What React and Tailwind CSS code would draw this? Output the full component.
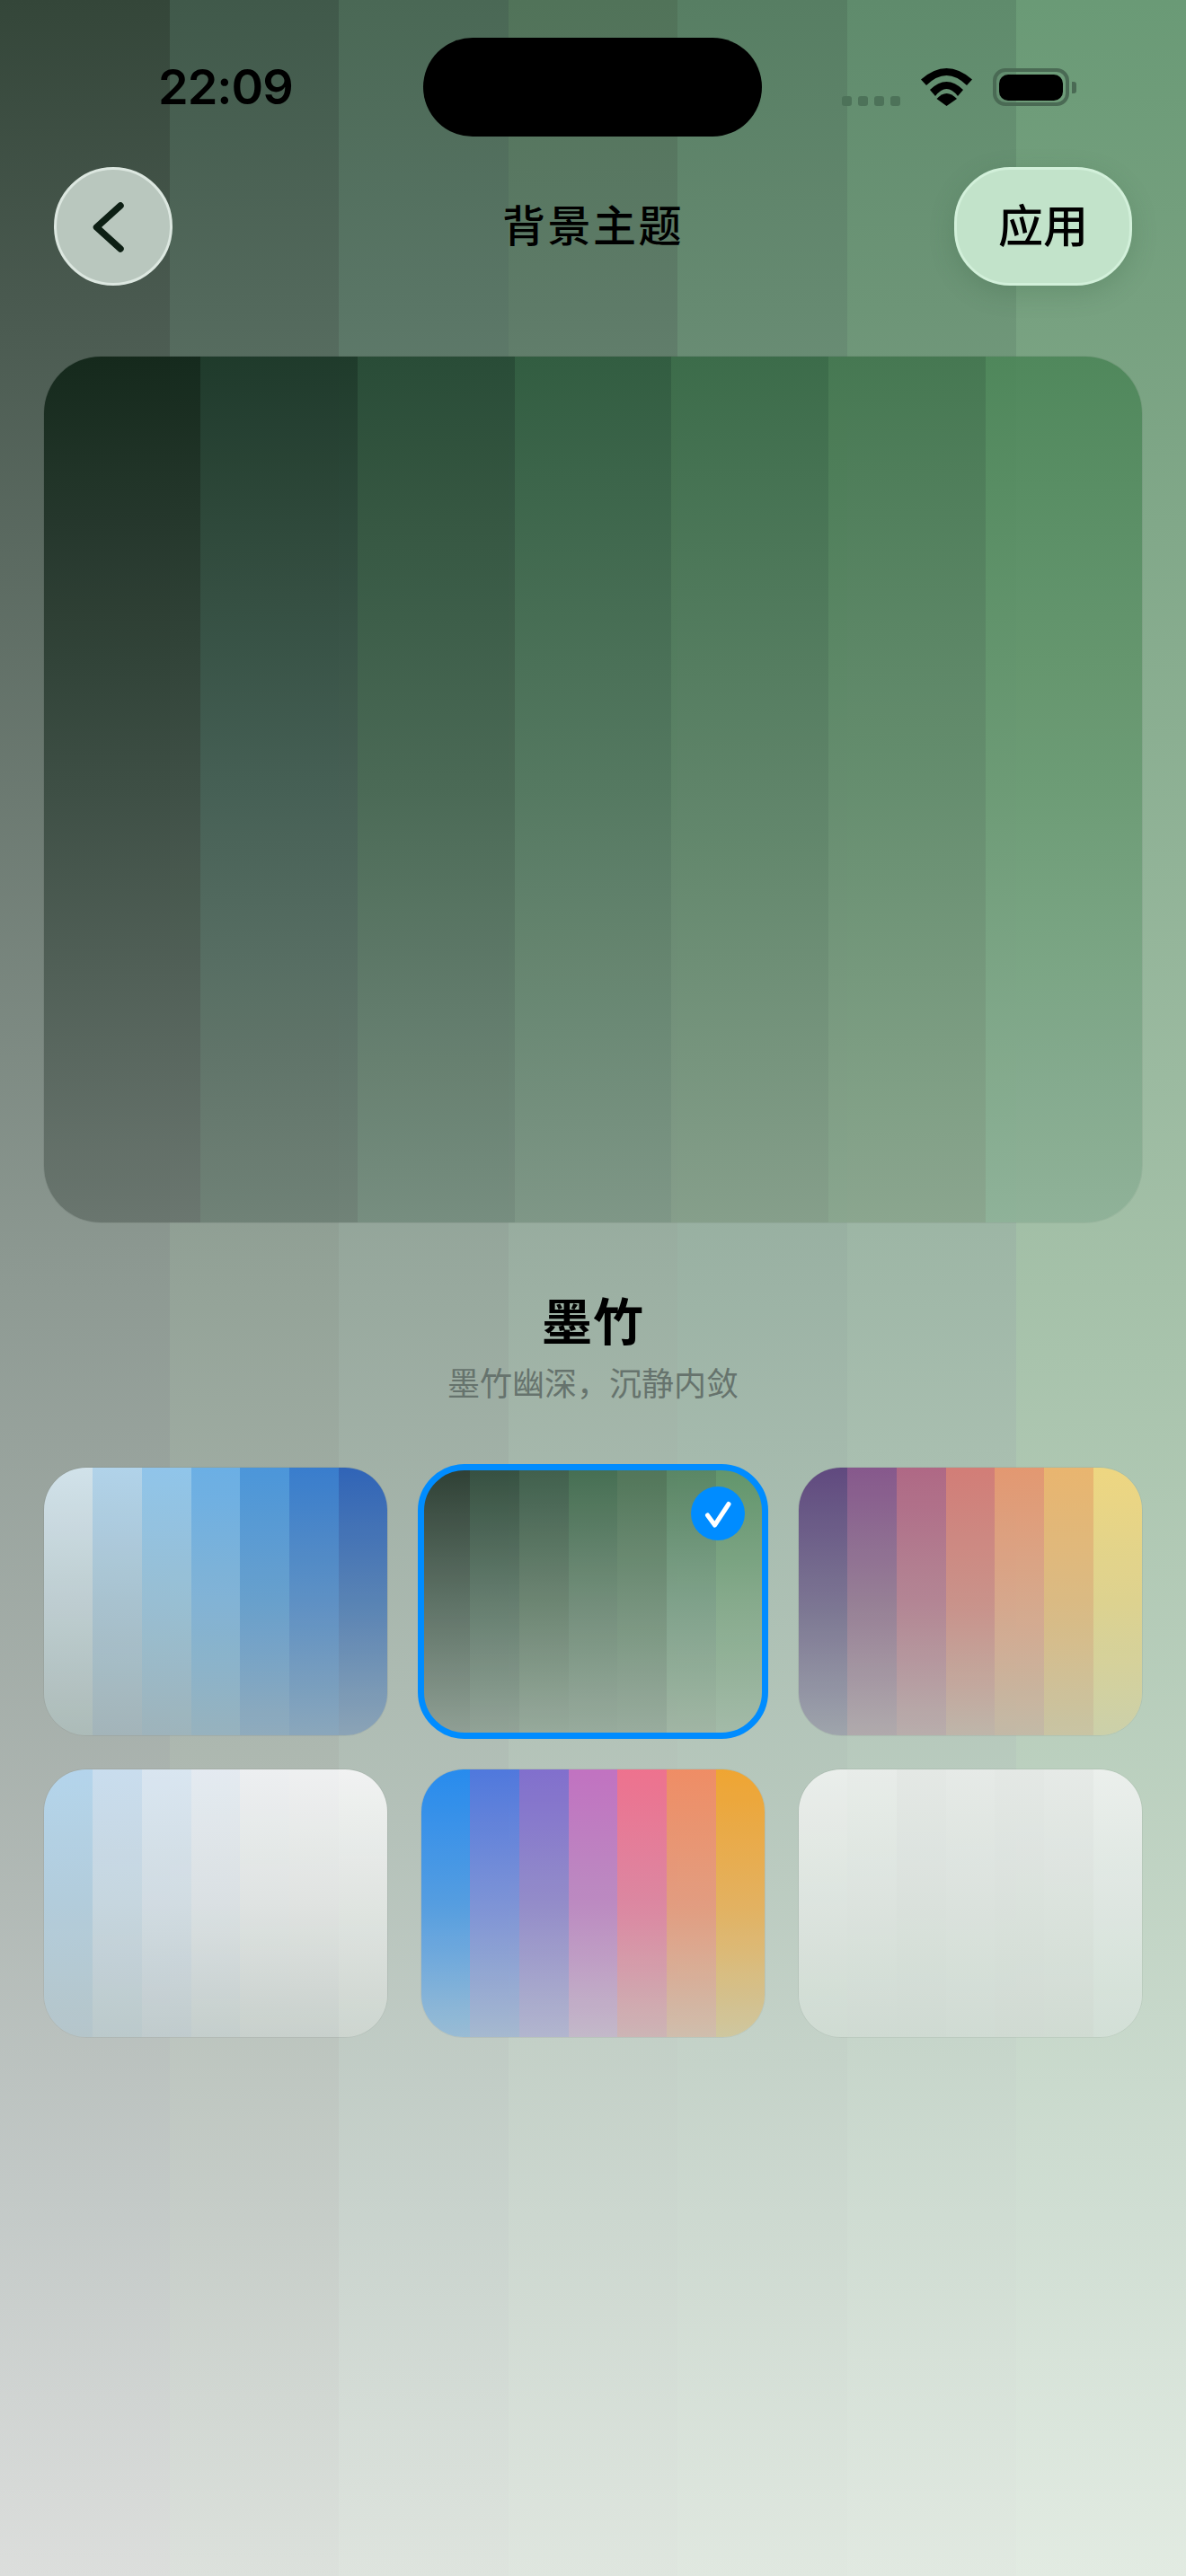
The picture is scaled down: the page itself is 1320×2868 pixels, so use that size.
import React from "react";

const pageStripes = [
  ["#344639 0%", "#4a5a50 12%", "#8e9a93 50%", "#c4cac8 86%", "#dcdedc 100%"],
  ["#40594a 0%", "#53695c 12%", "#94a398 50%", "#c6cdc8 86%", "#dce1dc 100%"],
  ["#4a6855 0%", "#5a7666 12%", "#98a99e 50%", "#c9d3cd 86%", "#dee4de 100%"],
  ["#517359 0%", "#5e7b68 12%", "#9cb0a3 50%", "#ccd7cf 86%", "#dfe6df 100%"],
  ["#577e63 0%", "#668a71 12%", "#9cb3a5 50%", "#cdd9d0 86%", "#e0e8e0 100%"],
  ["#5f8b6c 0%", "#6d9577 12%", "#a0b8a8 50%", "#cfdcd2 86%", "#e1e9e1 100%"],
  ["#6a9a76 0%", "#77a180 12%", "#a5c1a9 50%", "#d0ded3 86%", "#e2ebe2 100%"],
];

const previewStripes = [
  ["#122619", "#3c4d43", "#69756e"],
  ["#1c3828", "#445e53", "#6f8176"],
  ["#264a34", "#496854", "#768d7f"],
  ["#305c3f", "#53785f", "#7e9686"],
  ["#3a6b48", "#5d8367", "#859e8a"],
  ["#447750", "#658d6e", "#8aa68e"],
  ["#4e875a", "#6c9b75", "#8fb299"],
];

const themes = [
  [
    ["#d5e6ef", "#c0d0d4", "#adbcb9"],
    ["#b3d6ef", "#a9c4d2", "#a3b5ba"],
    ["#90c7ef", "#98c0d6", "#9eb4bc"],
    ["#68b0ea", "#80b4d8", "#96b2bf"],
    ["#4795de", "#659fcf", "#8fabbd"],
    ["#337bd0", "#5a8fc6", "#89a6bc"],
    ["#2a60b8", "#5480b5", "#8aa3b7"],
  ],
  [
    ["#28392e", "#5a6e62", "#8f9f94"],
    ["#2f4a3a", "#617a6b", "#92a397"],
    ["#3a5a47", "#69826f", "#97aa9c"],
    ["#406a4d", "#6f8b77", "#98ab9d"],
    ["#4c7254", "#729079", "#99ac9e"],
    ["#558360", "#7da088", "#a1b6a4"],
    ["#5e9368", "#84a98a", "#a3bba8"],
  ],
  [
    ["#5c437d", "#787090", "#9ea3ac"],
    ["#84528a", "#957b94", "#b0a9ac"],
    ["#b06383", "#b48292", "#b9adab"],
    ["#d57a74", "#cb8f88", "#bfb5a9"],
    ["#e7966e", "#d9a68a", "#c3b9a6"],
    ["#edb46c", "#ddba80", "#c9c4a3"],
    ["#f2d77f", "#e0d38d", "#cdd1a9"],
  ],
  [
    ["#b5d7f0", "#b3cede", "#b5c6cb"],
    ["#cbe0f2", "#c8d8e2", "#bccacc"],
    ["#dce9f5", "#d3dee5", "#c1ccce"],
    ["#e8eef5", "#dde3e6", "#c5cfcd"],
    ["#f1f3f5", "#e2e6e5", "#c9d1cd"],
    ["#f3f4f5", "#e3e6e4", "#c9d1cd"],
    ["#f5f6f6", "#e3e7e4", "#ced6d0"],
  ],
  [
    ["#1f88f2", "#4f9be3", "#98bcd6"],
    ["#4a74e0", "#7a90d8", "#a5b8d0"],
    ["#7e6acf", "#9189ca", "#b1b5cf"],
    ["#c26ec2", "#bc87c2", "#c3b8ca"],
    ["#f26d8c", "#de83a0", "#cdb4b4"],
    ["#f38a60", "#e59a7c", "#d0bdac"],
    ["#f3a32a", "#e6b05a", "#cfc79e"],
  ],
  [
    ["#eef1ee", "#dfe6e1", "#d0dcd3"],
    ["#ebefec", "#dee5e0", "#d0dbd3"],
    ["#e7eae8", "#dce3de", "#d0dbd3"],
    ["#e9ecea", "#dde4df", "#d1dcd4"],
    ["#e7eae8", "#dce3de", "#d1dbd3"],
    ["#e9ecea", "#dde4df", "#d1dcd3"],
    ["#eef1ef", "#e0e8e3", "#d3e0d7"],
  ],
];

const gradient = (stops) => ({ backgroundImage: `linear-gradient(to bottom, ${stops.join(", ")})` });

function Stripes({ data, className }) {
  return (
    <div className={`grid grid-cols-7 ${className}`}>
      {data.map((stops, i) => (
        <div key={i} style={gradient(stops)} />
      ))}
    </div>
  );
}

function Wifi() {
  return (
    <svg width="57" height="42" viewBox="0 0 57 42" fill="#000">
      <path d="M0 12.5 Q28.5 -12.5 57 12.5 L51 19 Q28.5 -3 6 19 Z" />
      <path d="M10 24 Q28.5 6 47 24 L41 31 Q28.5 15 16 31 Z" />
      <path d="M17.5 34 Q28.5 22 40 34 L28.5 42 Z" />
    </svg>
  );
}

function Thumb({ data, selected }) {
  return (
    <div className="relative h-[300px]">
      <div className="h-full overflow-hidden rounded-[48px] border border-black/5 opacity-[.94]">
        <Stripes data={data} className="-m-px h-[300px] w-[384px]" />
      </div>
      {selected && (
        <>
          <div className="absolute -inset-[3px] rounded-[52px] border-[7px] border-[#008cff]" />
          <div className="absolute right-[23px] top-[22px] flex h-[60px] w-[60px] items-center justify-center rounded-full bg-[#008cff]">
            <svg width="60" height="60" viewBox="0 0 60 60" fill="none">
              <path d="M18.5 32 L26.5 43 L42 19.5" stroke="#fff" strokeWidth="5" strokeLinecap="round" strokeLinejoin="round" />
            </svg>
          </div>
        </>
      )}
    </div>
  );
}

export default function App() {
  return (
    <div className="relative h-[2868px] w-[1320px] overflow-hidden font-['Inter','Noto_Sans_CJK_SC',sans-serif] text-black">
      <Stripes data={pageStripes} className="absolute inset-0" />
      <div className="relative flex flex-col">
        <div className="mt-[42px] flex h-[110px] items-center">
          <div className="w-[471px] pl-[176px] text-[54px] font-semibold leading-none tracking-[-1px]">22:09</div>
          <div className="h-[110px] w-[377px] rounded-[55px] bg-black" />
          <div className="ml-[89px] flex items-end">
            <div className="mb-[-21px] flex gap-[7px]">
              <div className="h-[11px] w-[11px] rounded-[3px] bg-[#4d7259]" />
              <div className="h-[11px] w-[11px] rounded-[3px] bg-[#4d7259]" />
              <div className="h-[11px] w-[11px] rounded-[3px] bg-[#4d7259]" />
              <div className="h-[11px] w-[11px] rounded-[3px] bg-[#4d7259]" />
            </div>
          </div>
          <div className="ml-[23px] flex items-center">
            <Wifi />
            <div className="ml-[23px] flex h-[42px] w-[85px] items-center justify-center rounded-[14px] border-[4px] border-[#4a6a54]">
              <div className="h-[29px] w-[71px] rounded-[10px] bg-black" />
            </div>
            <div className="ml-[3px] h-[13px] w-[5px] rounded-r-[3px] bg-[#4a6a54]" />
          </div>
        </div>

        <div className="mt-[34px] grid grid-cols-[1fr_auto_1fr] items-center px-[60px]">
          <div className="h-[132px] w-[132px] rounded-full border-[3px] border-[#dce7e0] bg-[#b9c7be]">
            <svg className="-m-[3px]" width="132" height="132" viewBox="0 0 132 132" fill="none">
              <path d="M74 43 L47.5 67 L74 91" stroke="#0d1f14" strokeWidth="7.5" strokeLinecap="round" strokeLinejoin="round" />
            </svg>
          </div>
          <div className="text-[48px] font-medium leading-none tracking-[2.5px]">背景主题</div>
          <div className="flex h-[132px] w-[198px] items-center justify-center justify-self-end rounded-[62px] border-[3px] border-[#d2f0da] bg-[#c2e3ca] text-[50px] font-medium leading-none shadow-[0_8px_28px_rgba(50,90,60,0.22)]">
            应用
          </div>
        </div>

        <div className="mx-[48px] mt-[78px] h-[966px] overflow-hidden rounded-[64px] border border-black/5 opacity-[.94]">
          <Stripes data={previewStripes} className="-m-px h-[966px] w-[1224px]" />
        </div>

        <div className="mt-[77px] text-center text-[56px] font-bold leading-[66px] tracking-[1px]">墨竹</div>
        <div className="mt-[13px] text-center text-[36px] leading-[46px] text-[#66736d]">墨竹幽深，沉静内敛</div>

        <div className="mx-[48px] mt-[69px] grid grid-cols-3 gap-[36px]">
          {themes.map((data, i) => (
            <Thumb key={i} data={data} selected={i === 1} />
          ))}
        </div>
      </div>
    </div>
  );
}
